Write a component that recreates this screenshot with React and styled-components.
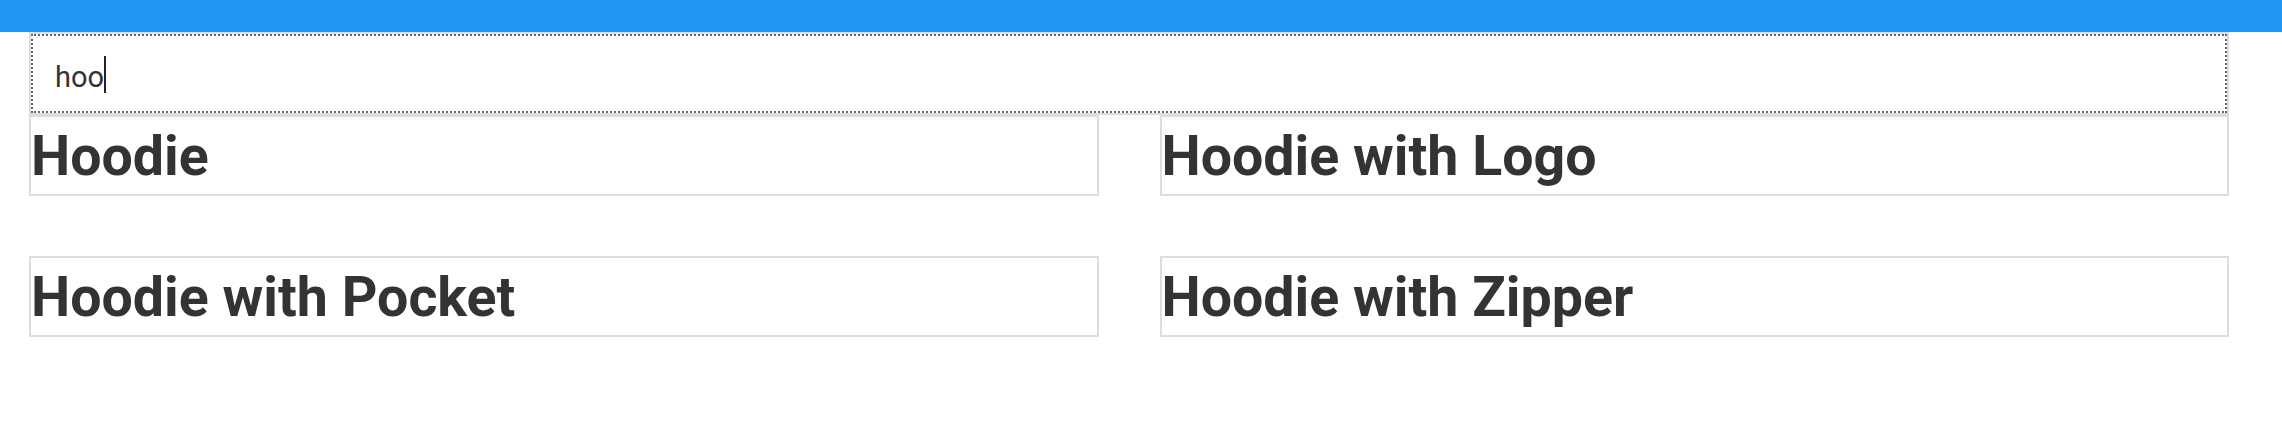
import React, { useEffect, useRef, useState } from "react";
import styled, { createGlobalStyle } from "styled-components";

const Global = createGlobalStyle`
  html, body { margin: 0; padding: 0; background: #fff; }
  body { font-family: Roboto, "Liberation Sans", Arial, sans-serif; color: #333; }
  * { box-sizing: border-box; }
`;

const Header = styled.header`
  height: 32px;
  background: #2196f3;
`;

const Main = styled.main`
  width: 2200px;
  margin-left: 29px;
  display: flex;
  flex-direction: column;
`;

const SearchBox = styled.div`
  position: relative;
`;

const SearchInput = styled.input`
  display: block;
  width: 100%;
  height: 83px;
  margin: 0;
  padding: 6px 24px 0;
  border: 2px solid #ddd;
  background: #fff;
  font-family: Roboto, "Liberation Sans", Arial, sans-serif;
  font-size: 29px;
  color: #333;
  caret-color: transparent;
  outline: 2px dotted #666;
  outline-offset: -4px;
  &:focus {
    outline: 2px dotted #666;
    outline-offset: -4px;
  }
`;

const Caret = styled.span`
  position: absolute;
  top: 24px;
  height: 37px;
  width: 2px;
  background: #222;
  pointer-events: none;
`;

const Measure = styled.span`
  position: absolute;
  visibility: hidden;
  white-space: pre;
  font-family: Roboto, "Liberation Sans", Arial, sans-serif;
  font-size: 29px;
`;

const Grid = styled.ul`
  list-style: none;
  margin: 0;
  padding: 0;
  display: grid;
  grid-template-columns: 1fr 1fr;
  column-gap: 61px;
  row-gap: 60px;
`;

const Card = styled.li`
  border: 2px solid #ddd;
  background: #fff;
  padding-top: 3px;
`;

const Title = styled.h2`
  margin: 0;
  font-family: Roboto, "Liberation Sans", Arial, sans-serif;
  font-weight: 700;
  font-size: 55.5px;
  line-height: 74px;
  color: #333;
  white-space: nowrap;
`;

const products = ["Hoodie", "Hoodie with Logo", "Hoodie with Pocket", "Hoodie with Zipper"];

export default function App() {
  const [query, setQuery] = useState("hoo");
  const [caretX, setCaretX] = useState(77);
  const ref = useRef(null);
  const measureRef = useRef(null);
  useEffect(() => {
    if (ref.current) {
      ref.current.focus();
      const n = ref.current.value.length;
      ref.current.setSelectionRange(n, n);
    }
  }, []);
  useEffect(() => {
    if (measureRef.current) {
      setCaretX(26 + measureRef.current.getBoundingClientRect().width);
    }
  }, [query]);
  const results = products.filter((p) => p.toLowerCase().includes(query.toLowerCase()));
  return (
    <>
      <Global />
      <Header />
      <Main>
        <SearchBox>
          <SearchInput ref={ref} value={query} onChange={(e) => setQuery(e.target.value)} />
          <Measure ref={measureRef}>{query}</Measure>
          <Caret style={{ left: caretX }} />
        </SearchBox>
        <Grid>
          {results.map((p) => (
            <Card key={p}>
              <Title>{p}</Title>
            </Card>
          ))}
        </Grid>
      </Main>
    </>
  );
}
